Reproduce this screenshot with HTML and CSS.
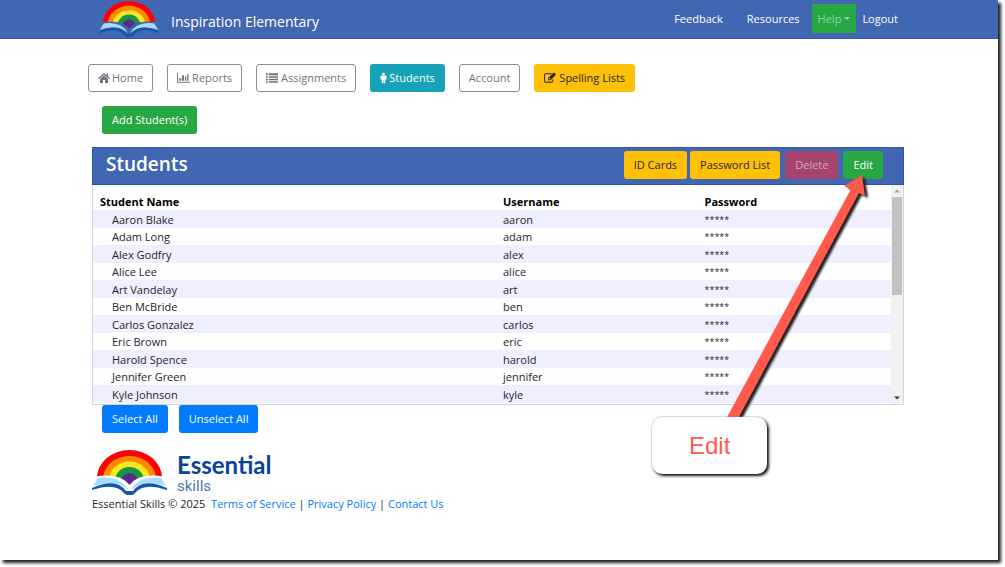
FILE: index.html
```html
<!DOCTYPE html>
<html lang="en">
<head>
<meta charset="utf-8">
<title>Essential Skills - Students</title>
<link rel="stylesheet" href="styles.css">
</head>
<body>
<svg class="defs" aria-hidden="true">
  <symbol id="rainbow" viewBox="0 0 75 45">
    <path fill="#fe0000" d="M5 28A32.500 28 0 0 1 70 28L66 33H9Z"/>
    <path fill="#ff8a00" d="M11 29A26.500 23 0 0 1 64 29L60 33H15Z"/>
    <path fill="#f8ea1c" d="M17 30A20.500 18.500 0 0 1 58 30L54 33H21Z"/>
    <path fill="#189447" d="M23 31A14.500 14 0 0 1 52 31L48 34H27Z"/>
    <path fill="#5b2a8c" d="M29 32A8.500 9 0 0 1 46 32L40 36H35Z"/>
    <path class="page-edge" d="M2 27Q27 22 37.500 35Q48 22 73 27V40Q50 29 41 42H34Q25 29 2 40Z"/>
    <path fill="#a8dcff" d="M6 28Q28 25 36 40Q24 29 1 36ZM69 28Q47 25 39 40Q51 29 74 36Z"/>
    <path fill="#1656a8" d="M0 38Q24 27 34 41H41Q51 27 75 38V40Q52 32 43 43Q42 45 37.500 45T32 43Q23 32 0 40Z"/>
  </symbol>
</svg>
<div class="page">
  <header class="topbar">
    <a class="brand" href="#home">
      <svg class="brand-logo" role="img" aria-label="Essential Skills"><use href="#rainbow"/></svg>
      <span class="brand-name">Inspiration Elementary</span>
    </a>
    <nav class="topnav">
      <a href="#feedback">Feedback</a>
      <a href="#resources">Resources</a>
      <a class="help" href="#help">Help<span class="caret"></span></a>
      <a class="logout" href="#logout">Logout</a>
    </nav>
  </header>

  <nav class="tabs">
    <button class="btn outline" type="button"><svg class="icon" viewBox="0 0 12 12"><path d="M6 1L0 6.300l.8.900L6 2.700l5.200 4.500.8-.9-2-1.800V1.500H8.500v1.700zM6 3.600L2 7v4h3V8h2v3h3V7z"/></svg>Home</button>
    <button class="btn outline" type="button"><svg class="icon wide" viewBox="0 0 14 12"><path d="M0 1h1v9h13v1H0zM2.500 6h2v3h-2zM5.500 3h2v6h-2zM8.500 4.500h1.500V9H8.500zM11 2h1.500v7H11z"/></svg>Reports</button>
    <button class="btn outline" type="button"><svg class="icon wide" viewBox="0 0 14 12"><path d="M0 1h2v2H0zM0 4h2v1.700H0zM0 6.700h2v1.700H0zM0 9.400h2v1.600H0zM3 1h10v2H3zM3 4h10v1.700H3zM3 6.700h10v1.700H3zM3 9.400h10v1.600H3z"/></svg>Assignments</button>
    <button class="btn info" type="button"><svg class="icon slim" viewBox="0 0 8 12"><circle cx="4" cy="1.500" r="1.500"/><path d="M1.500 3h5L7.500 4v3.500h-1V8H6v4H4.300V9h-.6v3H2V8h-.5v-.5h-1V4z"/></svg>Students</button>
    <button class="btn outline" type="button">Account</button>
    <button class="btn warning" type="button"><svg class="icon wide" viewBox="0 0 14 12"><path d="M8.500 1H2Q0 1 0 3v6q0 2 2 2h6q2 0 2-2V7L9 8v1q0 1-1 1H2Q1 10 1 9V3q0-1 1-1h5.500zM4.500 6L10.500 0l2.500 2.300L7 8.500H4.500zM5.300 6.400v1.300h1.300l.5-.5-1.300-1.300z"/></svg>Spelling Lists</button>
  </nav>

  <main class="content">
    <div class="actions"><button class="btn success" type="button">Add Student(s)</button></div>
    <section class="panel">
      <div class="panel-head">
        <h1>Students</h1>
        <div class="panel-tools">
          <button class="btn warning" type="button">ID Cards</button>
          <button class="btn warning" type="button">Password List</button>
          <button class="btn danger" type="button" disabled>Delete</button>
          <button class="btn success" type="button">Edit</button>
        </div>
      </div>
      <div class="panel-body">
        <table class="students">
          <thead><tr><th>Student Name</th><th>Username</th><th>Password</th></tr></thead>
          <tbody>
            <tr><td>Aaron Blake</td><td>aaron</td><td class="mask">*****</td></tr>
            <tr><td>Adam Long</td><td>adam</td><td class="mask">*****</td></tr>
            <tr><td>Alex Godfry</td><td>alex</td><td class="mask">*****</td></tr>
            <tr><td>Alice Lee</td><td>alice</td><td class="mask">*****</td></tr>
            <tr><td>Art Vandelay</td><td>art</td><td class="mask">*****</td></tr>
            <tr><td>Ben McBride</td><td>ben</td><td class="mask">*****</td></tr>
            <tr><td>Carlos Gonzalez</td><td>carlos</td><td class="mask">*****</td></tr>
            <tr><td>Eric Brown</td><td>eric</td><td class="mask">*****</td></tr>
            <tr><td>Harold Spence</td><td>harold</td><td class="mask">*****</td></tr>
            <tr><td>Jennifer Green</td><td>jennifer</td><td class="mask">*****</td></tr>
            <tr><td>Kyle Johnson</td><td>kyle</td><td class="mask">*****</td></tr>
          </tbody>
        </table>
        <div class="scrollbar" aria-hidden="true">
          <svg viewBox="0 0 12 12"><path fill="#a3a3a3" d="M3 7.500h6L6 4.500z"/></svg>
          <div class="track"><div class="thumb"></div></div>
          <svg viewBox="0 0 12 12"><path fill="#404040" d="M3 4.500h6L6 7.500z"/></svg>
        </div>
      </div>
    </section>
    <div class="selection">
      <button class="btn primary" type="button">Select All</button>
      <button class="btn primary" type="button">Unselect All</button>
    </div>
    <footer class="footer">
      <div class="footer-brand">
        <svg class="footer-logo" aria-hidden="true"><use href="#rainbow"/></svg>
        <div class="wordmark"><span class="word-main">Essential</span><span class="word-sub">skills</span></div>
      </div>
      <p class="legal">Essential Skills © 2025 &nbsp;<a href="#terms">Terms of Service</a> | <a href="#privacy">Privacy Policy</a> | <a href="#contact">Contact Us</a></p>
    </footer>
  </main>

  <svg class="arrow" viewBox="0 0 225 260" aria-hidden="true"><path d="M68 260L199 19 192 16 210 5 213 26 207 23 80 260Z"/></svg>
  <div class="callout">Edit</div>
</div>
</body>
</html>
```
FILE: styles.css
```css
* { box-sizing: border-box; }

body {
  display: flex;
  min-height: 100vh;
  margin: 0;
  padding: 0 7px 7px 0;
  background: #fff;
  color: #212529;
  font-family: "Open Sans", "Noto Sans", sans-serif;
  font-size: 11px;
  line-height: 17px;
}

a { color: #007bff; text-decoration: none; }

.defs { position: absolute; width: 0; height: 0; }

.page {
  position: relative;
  flex: 1;
  background: #fff;
  box-shadow: 3px 3px 3px #222;
}

.topbar {
  display: flex;
  justify-content: space-between;
  height: 39px;
  padding: 0 100px 0 99px;
  background: #4267b2;
  border-bottom: 1px solid #385a9f;
}

.brand { display: flex; gap: 12px; color: #fff; }
.brand-logo { --edge: #4267b2; width: 60px; height: 37px; padding-top: 1px; }
.brand-name { padding-top: 12px; font-size: 14px; line-height: 20px; }
.page-edge { fill: var(--edge, #fff); }

.topnav { display: flex; align-items: flex-start; padding-top: 4px; }
.topnav a { padding: 6px 12px; line-height: 17px; color: #fff; }
.topnav .help {
  display: flex;
  align-items: center;
  gap: 3px;
  padding: 6px;
  background: #28a745;
  color: #94d3a2;
}
.topnav .logout { padding: 6px 0 6px 6px; }

.caret {
  border-top: 3px solid;
  border-left: 3px solid transparent;
  border-right: 3px solid transparent;
}

.btn {
  display: inline-flex;
  align-items: center;
  justify-content: center;
  gap: 2px;
  height: 28px;
  padding: 0 9px 1px;
  border: 1px solid transparent;
  border-radius: 3px;
  font: inherit;
  white-space: nowrap;
}
.outline { background: #fff; border-color: #868e96; color: #6c757d; }
.info { background: #17a2b8; color: #fff; }
.warning { background: #ffc107; color: #212529; }
.success { background: #28a745; color: #fff; }
.primary { background: #007bff; color: #fff; }
.danger { background: #a5446c; color: #c9a9d0; }

.icon { width: 12px; height: 12px; fill: currentColor; fill-rule: evenodd; }
.icon.wide { width: 13px; }
.icon.slim { width: 7px; }

.tabs { display: flex; gap: 14px; padding: 25px 88px 14px; }

.content { padding: 0 94px 0 92px; }
.actions { display: flex; padding: 0 10px 13px; }

.panel-head {
  display: flex;
  justify-content: space-between;
  height: 38px;
  padding: 3px 20px 0 13px;
  background: #4267b2;
  border: 1px solid #2f56a5;
}
.panel-head h1 {
  margin: 0;
  color: #fff;
  font-size: 19px;
  line-height: 27px;
  font-weight: 600;
}
.panel-tools { display: flex; gap: 5px; }
.panel-tools .warning + .warning { margin-left: -2px; }

.panel-body {
  display: flex;
  height: 220px;
  border: 1px solid #d5d5d5;
  border-top: 0;
  overflow: hidden;
}
.students {
  width: 100%;
  align-self: flex-start;
  border-collapse: collapse;
  table-layout: fixed;
  margin-top: 8px;
}
.students th, .students td { height: 17px; padding: 0 11px; line-height: 17px; text-align: left; }
.students th { color: #000; font-weight: 700; }
.students th:first-child { width: 50%; padding-left: 7px; }
.students td:first-child { padding-left: 19px; }
.students th:last-child, .students td:last-child { padding-left: 13px; }
.students tbody tr:nth-child(odd) { background: #f0efff; }
.students tbody tr:nth-child(odd) td { height: 18px; }
.students .mask { font-size: 9px; }

.scrollbar {
  display: flex;
  flex: none;
  flex-direction: column;
  width: 12px;
  background: #f1f1f1;
}
.scrollbar svg { width: 12px; height: 12px; }
.track { flex: 1; }
.thumb { height: 50%; margin: 0 1px; background: #c1c1c1; }

.selection { display: flex; gap: 11px; padding: 0 10px; }

.footer { padding-top: 17px; }
.footer-brand { display: flex; gap: 10px; }
.footer-logo { width: 75px; height: 45px; }
.wordmark { display: flex; flex-direction: column; padding-top: 2px; color: #0a4595; }
.word-main { font: 700 24px/25px Lato, sans-serif; }
.word-sub { font: 15px/18px "Liberation Sans Narrow", Roboto, sans-serif; color: #4a76b5; }
.legal { margin: 0; }

.arrow {
  position: absolute;
  left: 652px;
  top: 170px;
  width: 225px;
  height: 260px;
  fill: #ff5a4c;
  filter: drop-shadow(3px 2px 1px #222);
}
.callout {
  position: absolute;
  left: 652px;
  top: 417px;
  padding: 15px 37px;
  border-radius: 10px;
  background: #fff;
  box-shadow: 2px 2px 3px #111, 0 0 2px #999;
  color: #ff5a4c;
  font: 24px/27px "Liberation Sans", Arial, sans-serif;
}
```
